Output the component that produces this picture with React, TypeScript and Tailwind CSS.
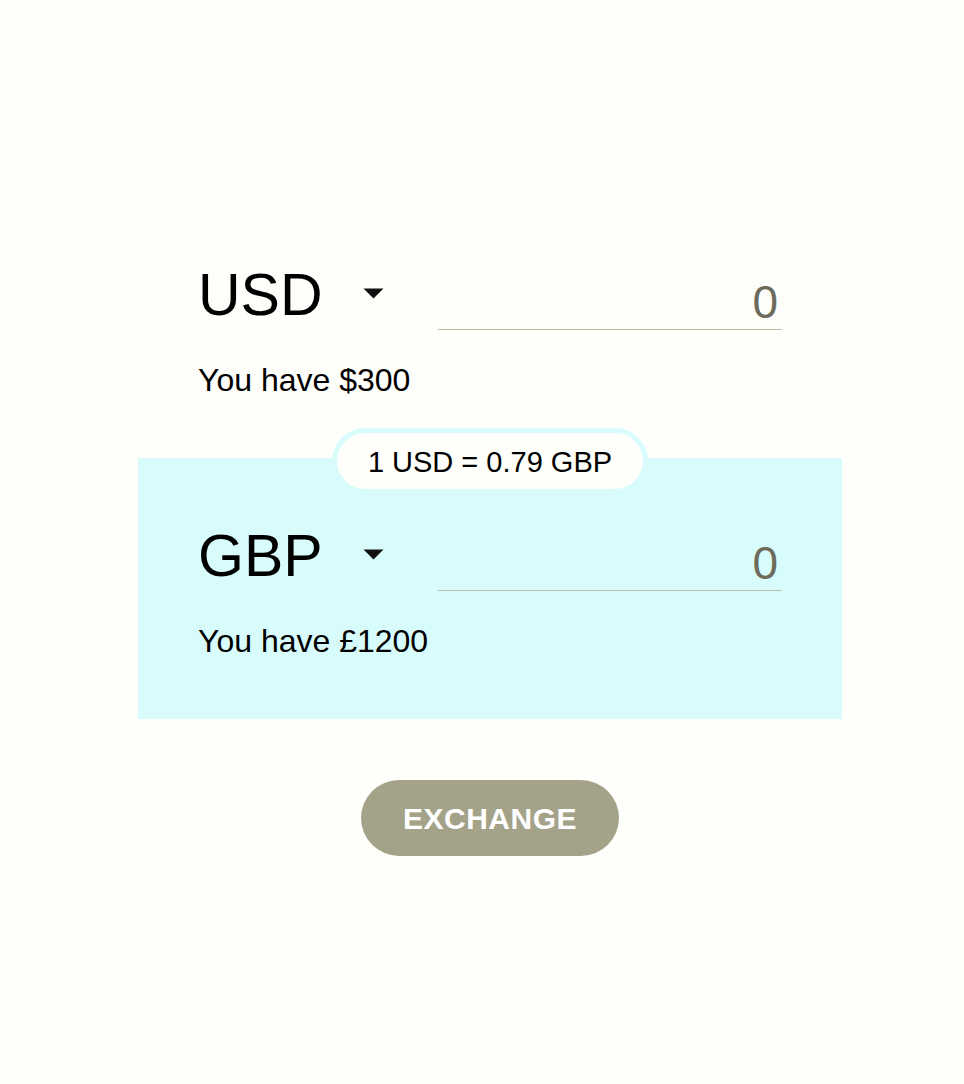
import { useState } from "react";

function Caret() {
  return (
    <svg width="21" height="11" viewBox="0 0 21 11" className="mt-[24px]">
      <path d="M0.5 0.5 L20.5 0.5 L10.5 10.5 Z" fill="#111" />
    </svg>
  );
}

function CurrencyRow({
  code,
  balance,
  value,
  onChange,
}: {
  code: string;
  balance: string;
  value: string;
  onChange: (v: string) => void;
}) {
  return (
    <div className="px-[60px] pt-[67px]">
      <div className="flex items-start justify-between">
        <div className="flex items-start gap-[40px]">
          <span className="mt-[2px] text-[59px] leading-none text-black">{code}</span>
          <Caret />
        </div>
        <input
          value={value}
          onChange={(e) => onChange(e.target.value)}
          className="w-[344px] h-[66px] border-b border-[#bdbca4] bg-transparent text-right text-[46px] text-[#6d6c5c] outline-none pt-[12px] pr-[4px]"
        />
      </div>
      <p className="mt-[34px] text-[32px] leading-none text-black">You have {balance}</p>
    </div>
  );
}

export default function App() {
  const [from, setFrom] = useState("0");
  const [to, setTo] = useState("0");

  return (
    <div
      className="min-h-[1084px] w-full bg-[#fefefb] flex flex-col items-center pt-[197px] pl-[16px]"
      style={{ fontFamily: "'Liberation Sans', Arial, sans-serif" }}
    >
      <div className="w-[704px]">
        <div className="h-[261px]">
          <CurrencyRow code="USD" balance="$300" value={from} onChange={setFrom} />
        </div>
        <div className="relative h-[261px] bg-[#d8fcfc]">
          <div className="absolute left-1/2 -translate-x-1/2 -top-[30px] h-[66px] w-[316px] rounded-full border-[5px] border-[#d8fcfc] bg-[#fefefb] flex items-center justify-center pt-[3px]">
            <span className="text-[29px] leading-none text-black">1 USD = 0.79 GBP</span>
          </div>
          <CurrencyRow code="GBP" balance="£1200" value={to} onChange={setTo} />
        </div>
      </div>
      <button className="mt-[61px] h-[76px] w-[258px] rounded-full bg-[#a4a38a] text-white text-[30px] font-bold tracking-[0.5px]">
        EXCHANGE
      </button>
    </div>
  );
}
